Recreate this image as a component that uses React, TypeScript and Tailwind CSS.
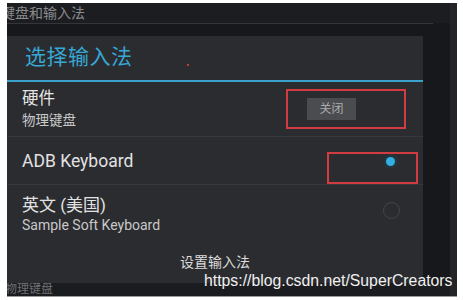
import React from 'react'

const font = { fontFamily: 'Roboto, "Noto Sans CJK SC", sans-serif' }

export default function App() {
  return (
    <div className="relative w-[463px] h-[300px] bg-white overflow-hidden" style={font}>
      <div className="pl-[7px] pt-[3px]">
        <div className="flex w-[450px] h-[293px] bg-[#17181b]">
          <div className="w-[443px] flex flex-col">
            {/* settings header behind dialog */}
            <div className="h-[20px] bg-[#1c1d20] overflow-hidden">
              <div className="-ml-[6px] text-[14px] leading-[20px] text-[#8a8b8e] whitespace-nowrap">键盘和输入法</div>
            </div>
            <div className="h-[1px] w-[426px] bg-[#34353a]" />
            <div className="h-[12px]" />

            {/* dialog */}
            <div className="w-[416px] h-[247px] bg-[#2b2c30] flex flex-col">
              <div className="h-[44px] flex items-center pl-[18px] relative">
                <span className="text-[21px] text-[#37a7d4] tracking-[0.5px]">选择输入法</span>
                <span className="absolute left-[180px] top-[28px] w-[2px] h-[2px] bg-[#c0393b]" />
              </div>
              <div className="h-[2px] bg-[#3aa2cc]" />

              <div className="h-[55px] flex items-center justify-between pl-[15px] pr-[67px] border-b border-[#37383c]">
                <div className="flex flex-col">
                  <span className="text-[16.5px] leading-[20px] text-[#e6e6e6]">硬件</span>
                  <span className="text-[13.5px] leading-[18px] text-[#c8c8c8] mt-[2px]">物理键盘</span>
                </div>
                <div className="w-[49px] h-[22px] bg-[#4b4c50] flex items-center justify-center text-[12px] text-[#a9aaad]">
                  关闭
                </div>
              </div>

              <div className="h-[48px] flex items-center justify-between pl-[15px] pr-[25px] border-b border-[#37383c]">
                <span className="text-[17.5px] text-[#e2e2e2] mt-[2px]">ADB Keyboard</span>
                <div className="w-[15px] h-[15px] rounded-full bg-[#23343d] flex items-center justify-center mt-[2px]">
                  <div className="w-[9px] h-[9px] rounded-full bg-[#33b0e3]" />
                </div>
              </div>

              <div className="h-[58px] flex items-center justify-between pl-[15px] pr-[23px]">
                <div className="flex flex-col">
                  <span className="text-[17px] leading-[22px] text-[#e2e2e2]">英文 (美国)</span>
                  <span className="text-[14px] leading-[18px] text-[#c8c8c8]">Sample Soft Keyboard</span>
                </div>
                <div className="w-[17px] h-[17px] rounded-full border border-[#45464b] mb-[8px]" />
              </div>

              <div className="flex-1 flex items-center justify-center pb-[2px]">
                <span className="text-[14px] text-[#dcdcdc]">设置输入法</span>
              </div>
            </div>

            <div className="flex-1 bg-[#1b1c1f] overflow-hidden">
              <div className="-ml-[2px] text-[12px] leading-[13px] text-[#6f7074] whitespace-nowrap">物理键盘</div>
            </div>
          </div>
          <div className="w-[7px] bg-[#232427]" />
        </div>
        <div className="h-[1px] w-[450px] bg-[#9a9a9a]" />
      </div>

      {/* annotation boxes */}
      <div className="absolute left-[286px] top-[89px] w-[120px] h-[40px] border-2 border-[#d23b3f]" />
      <div className="absolute left-[327px] top-[152px] w-[91px] h-[32px] border-2 border-[#d23b3f]" />

      {/* watermark */}
      <div className="absolute left-[204px] top-[271px] text-[15.8px] leading-[20px] text-[#f0f0f0] whitespace-nowrap" style={{ fontFamily: '"Liberation Sans", Arial, sans-serif' }}>
        https://blog.csdn.net/SuperCreators
      </div>
    </div>
  )
}
